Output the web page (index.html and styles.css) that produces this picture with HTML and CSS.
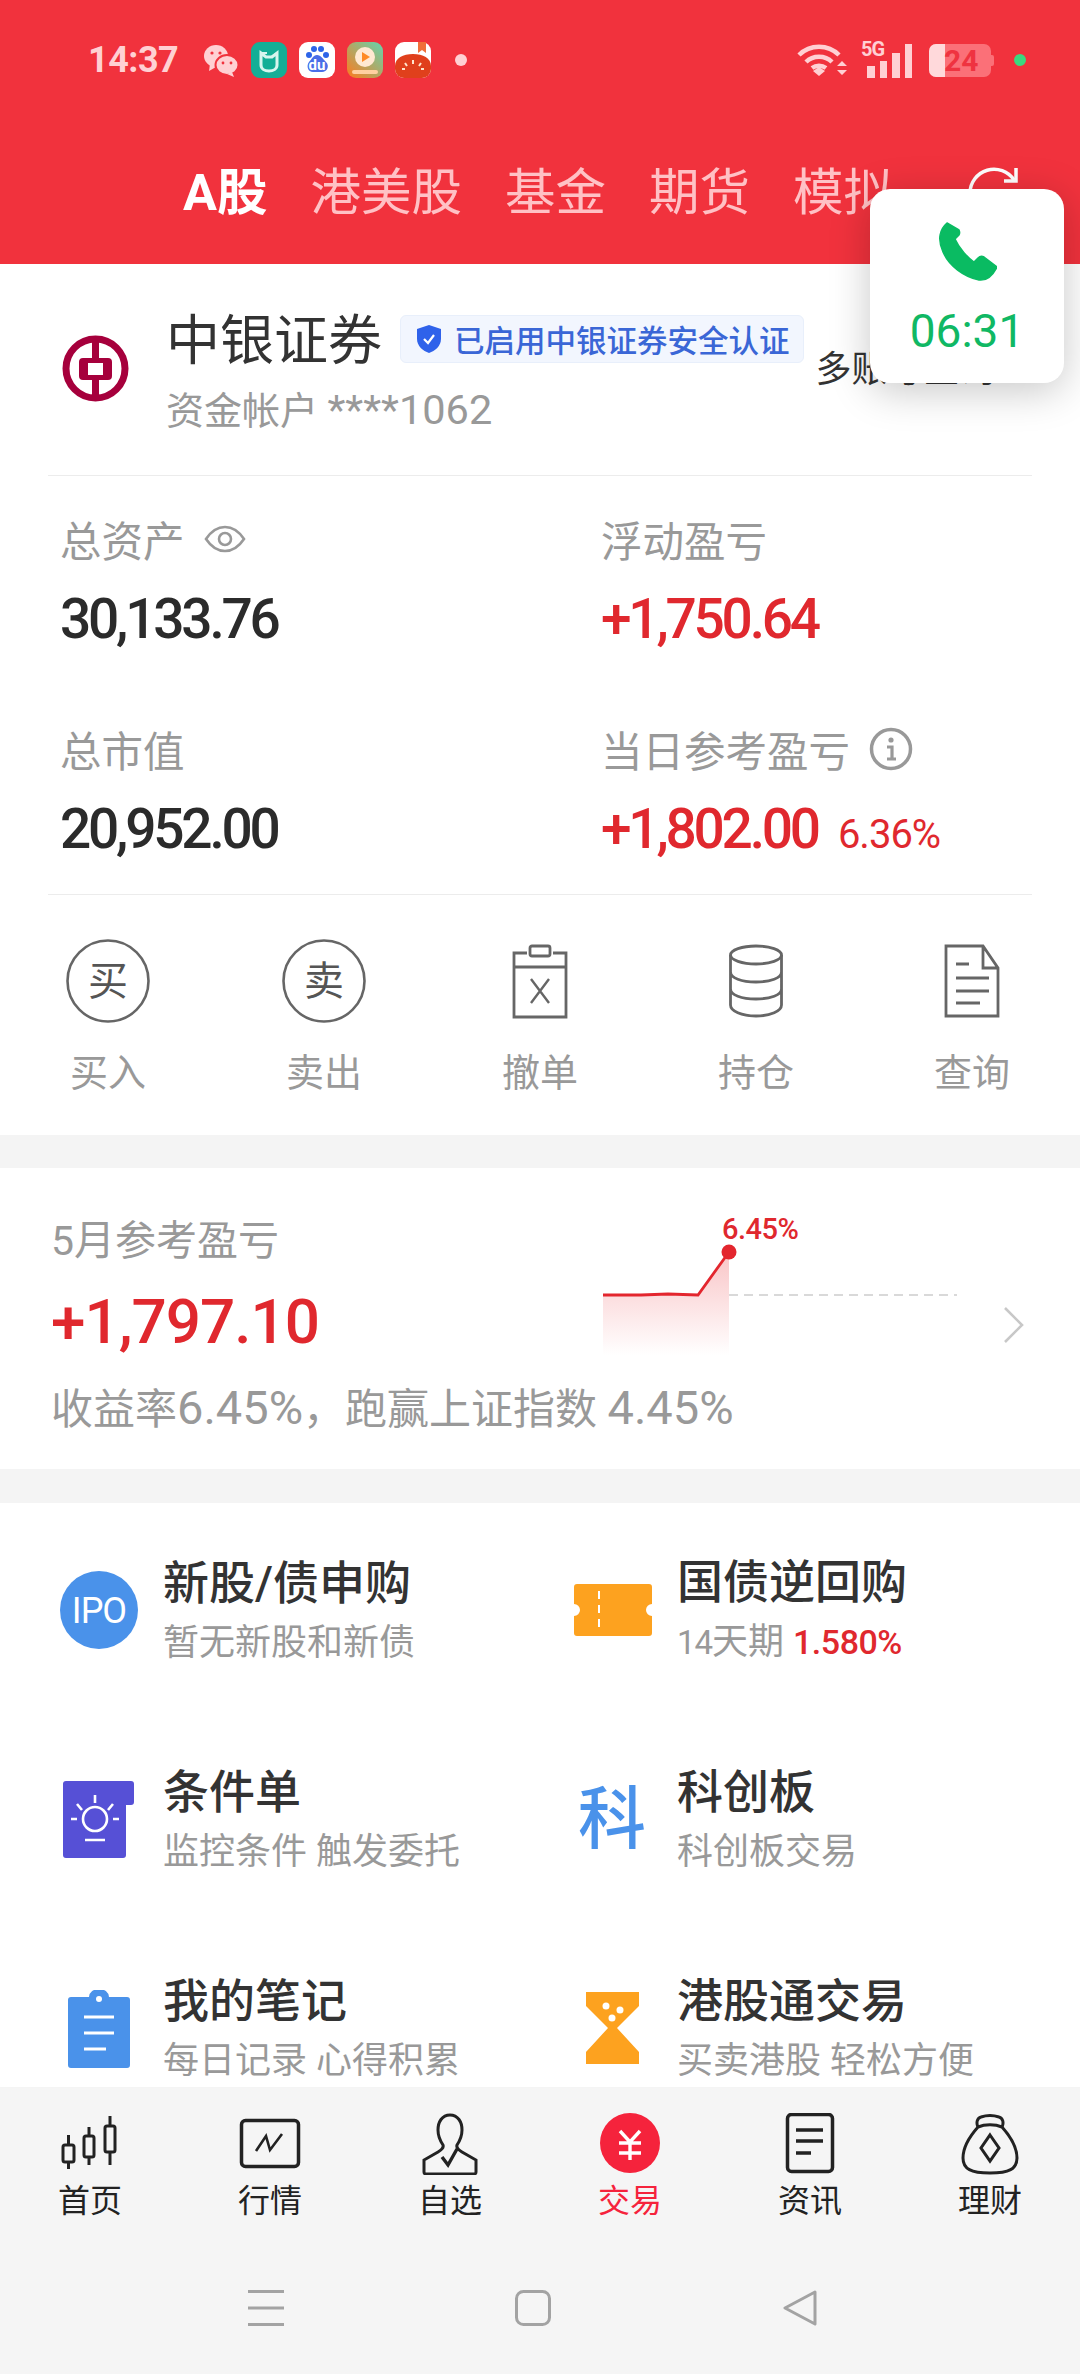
FILE: index.html
```html
<!DOCTYPE html>
<html lang="zh">
  <head>
    <title>交易</title>
    <meta charset="utf-8" />
    <link rel="stylesheet" href="styles.css">
  </head>
  <body>
    <div class="page">
      <div class="header">
        <div class="status-bar">
          <span class="status-time">14:37</span>
          <div class="status-apps">
            <svg width="36" height="36" viewBox="0 0 36 36">
              <ellipse cx="13" cy="14" rx="12" ry="11" fill="#ffd0d3" />
              <path d="M7 22l-1 7 7-4z" fill="#ffd0d3" />
              <ellipse cx="24" cy="23" rx="11.5" ry="10" fill="#ffd0d3" stroke="#f1323d" stroke-width="2" />
              <path d="M29 30l2 5-7-3z" fill="#ffd0d3" />
              <circle cx="9" cy="11" r="1.6" fill="#f1323d" />
              <circle cx="17" cy="11" r="1.6" fill="#f1323d" />
              <circle cx="20" cy="21" r="1.4" fill="#f1323d" />
              <circle cx="28" cy="21" r="1.4" fill="#f1323d" />
            </svg>
            <svg width="36" height="36" viewBox="0 0 36 36">
              <rect width="36" height="36" rx="9" fill="#14ae96" />
              <path d="M10 11l5 4h6l5-4v12c0 4-4 6-8 6s-8-2-8-6z" fill="none" stroke="#d8f5ee" stroke-width="3" />
              <path d="M10 11h6M20 15l6-4" stroke="#d8f5ee" stroke-width="2" />
            </svg>
            <svg width="36" height="36" viewBox="0 0 36 36">
              <rect width="36" height="36" rx="9" fill="#fff" />
              <circle cx="10" cy="13" r="3" fill="#2d64e8" />
              <circle cx="15" cy="7" r="3" fill="#2d64e8" />
              <circle cx="22" cy="7" r="3" fill="#2d64e8" />
              <circle cx="27" cy="13" r="3" fill="#2d64e8" />
              <path d="M18 13c-4 0-5 4-8 7-3 4-1 10 4 10h9c5 0 8-6 4-10-3-3-5-7-9-7z" fill="#4a6de8" />
              <text x="18" y="28" class="app-du">du</text>
            </svg>
            <svg width="36" height="36" viewBox="0 0 36 36">
              <defs>
                <linearGradient id="videoBg" x1="0" y1="1" x2="1" y2="0">
                  <stop offset="0" stop-color="#ff7a1c" />
                  <stop offset="1" stop-color="#62d6b0" />
                </linearGradient>
              </defs>
              <rect width="36" height="36" rx="9" fill="url(#videoBg)" />
              <circle cx="18" cy="15" r="10" fill="#ffe9d2" />
              <path d="M15 10l8 5-8 5z" fill="#ff8a25" />
              <rect x="5" y="28" width="26" height="4" rx="2" fill="#ffd0a0" />
            </svg>
            <svg width="36" height="36" viewBox="0 0 36 36">
              <rect width="36" height="36" rx="9" fill="#fff" />
              <path d="M23 0h8v11l-4-3-4 3z" fill="#f0703a" />
              <path d="M0 24c0-8 8-12 18-12s18 4 18 12v3a9 9 0 0 1-9 9H9a9 9 0 0 1-9-9z" fill="#e0401c" />
              <path d="M18 18v4M10 21l2 3M26 21l-2 3M7 27h3M26 27h3" stroke="#ffe5cc" stroke-width="2" />
            </svg>
            <span class="status-dot"></span>
          </div>
          <div class="status-right">
            <svg width="50" height="36" viewBox="0 0 50 36">
              <path d="M2 13c11-11 29-11 40 0M9 20c7-7 19-7 26 0M15 26c4-3 10-3 14 0" fill="none" stroke="#ffd0d3" stroke-width="4.5" />
              <path d="M16 29l6-4 6 4-6 5z" fill="#ffd0d3" />
              <path d="M40 24l5-5 5 5zM40 28l5 5 5-5z" fill="#ffd0d3" />
            </svg>
            <div class="signal">
              <span class="signal-5g">5G</span>
              <i class="bar bar-1"></i><i class="bar bar-2"></i><i class="bar bar-3"></i><i class="bar bar-4"></i>
            </div>
            <div class="battery">
              <span class="battery-fill"></span>
              <span class="battery-num">24</span>
            </div>
            <span class="status-online"></span>
          </div>
        </div>
        <div class="tabs">
          <span class="tab tab-active">A股</span>
          <span class="tab">港美股</span>
          <span class="tab">基金</span>
          <span class="tab">期货</span>
          <span class="tab">模拟</span>
          <svg class="refresh" width="60" height="60" viewBox="0 0 60 60">
            <path d="M4 30a24 24 0 0 1 44-13" fill="none" stroke="#fff" stroke-width="3.5" />
            <path d="M38 18h12V5" fill="none" stroke="#fff" stroke-width="3.5" />
          </svg>
        </div>
      </div>

      <div class="content">
        <div class="panel account">
          <div class="account-row">
            <svg class="bank-logo" width="67" height="67" viewBox="0 0 67 67">
              <circle cx="33.500" cy="33.500" r="29.500" fill="none" stroke="#a6003c" stroke-width="7" />
              <path d="M21 23h25a4 4 0 0 1 4 4v14a4 4 0 0 1-4 4H21a4 4 0 0 1-4-4V27a4 4 0 0 1 4-4zM26 28v12h15V28z" fill="#a6003c" fill-rule="evenodd" />
              <path d="M33.500 4v20M33.500 44v20" stroke="#a6003c" stroke-width="7" />
            </svg>
            <div class="account-info">
              <div class="account-title">
                <span class="account-name">中银证券</span>
                <span class="badge">
                  <svg width="26" height="28" viewBox="0 0 26 28">
                    <path d="M13 0l12 4v10c0 7-6 12-12 14C7 26 1 21 1 14V4z" fill="#2f62ea" />
                    <path d="M8 14l4 4 6-8" fill="none" stroke="#fff" stroke-width="2.2" />
                  </svg>
                  已启用中银证券安全认证
                </span>
              </div>
              <div class="account-sub">资金帐户 <span class="account-no">****1062</span></div>
            </div>
            <span class="account-more">多账号查询</span>
          </div>
        </div>

        <div class="panel">
          <div class="metrics">
            <div class="metric">
              <div class="metric-label">
                总资产
                <svg width="42" height="30" viewBox="0 0 42 30">
                  <path d="M2 15C8 6 14 3 21 3s13 3 19 12c-6 9-12 12-19 12S8 24 2 15z" fill="none" stroke="#999" stroke-width="2.6" />
                  <circle cx="21" cy="15" r="6" fill="none" stroke="#999" stroke-width="2.6" />
                </svg>
              </div>
              <div class="metric-value">30,133.76</div>
            </div>
            <div class="metric">
              <div class="metric-label">浮动盈亏</div>
              <div class="metric-value up">+1,750.64</div>
            </div>
            <div class="metric">
              <div class="metric-label">总市值</div>
              <div class="metric-value">20,952.00</div>
            </div>
            <div class="metric">
              <div class="metric-label">
                当日参考盈亏
                <svg width="44" height="44" viewBox="0 0 44 44">
                  <circle cx="22" cy="22" r="19.500" fill="none" stroke="#999" stroke-width="3.5" />
                  <circle cx="22" cy="13" r="2.600" fill="#999" />
                  <path d="M18 20h5v12M18 32h9" fill="none" stroke="#999" stroke-width="3.2" />
                </svg>
              </div>
              <div class="metric-value up">+1,802.00<span class="metric-pct">6.36%</span></div>
            </div>
          </div>
        </div>

        <div class="actions">
          <div class="action">
            <svg width="84" height="84" viewBox="0 0 84 84">
              <circle cx="42" cy="42" r="40.500" fill="none" stroke="#666" stroke-width="2.600" />
              <text x="42" y="56" class="action-char">买</text>
            </svg>
            <span>买入</span>
          </div>
          <div class="action">
            <svg width="84" height="84" viewBox="0 0 84 84">
              <circle cx="42" cy="42" r="40.500" fill="none" stroke="#666" stroke-width="2.600" />
              <text x="42" y="56" class="action-char">卖</text>
            </svg>
            <span>卖出</span>
          </div>
          <div class="action">
            <svg width="84" height="84" viewBox="0 0 84 84" fill="none" stroke="#666" stroke-width="2.800">
              <path d="M29 14h-13v64h52V14H55M16 28h52" />
              <rect x="32" y="7" width="20" height="10" rx="2" />
              <path d="M33 40l18 24M51 40L33 64" stroke-width="2.400" />
            </svg>
            <span>撤单</span>
          </div>
          <div class="action">
            <svg width="84" height="84" viewBox="0 0 84 84" fill="none" stroke="#666" stroke-width="2.800">
              <ellipse cx="42" cy="16" rx="25.500" ry="9" />
              <path d="M16.500 16v50c0 6 11 11 25.500 11s25.500-5 25.500-11V16M16.500 33c0 6 11 10 25.500 10s25.500-4 25.500-10M16.500 50c0 6 11 10 25.500 10s25.500-4 25.500-10" />
            </svg>
            <span>持仓</span>
          </div>
          <div class="action">
            <svg width="84" height="84" viewBox="0 0 84 84" fill="none" stroke="#666" stroke-width="2.800">
              <path d="M16 7h37l15 22v48H16zM53 7v22h15" />
              <path d="M26 25h13M26 39h33M26 52h33M26 64h24" />
            </svg>
            <span>查询</span>
          </div>
        </div>

        <div class="panel profit">
          <div class="profit-text">
            <div class="profit-label">5月参考盈亏</div>
            <div class="profit-value">+1,797.10</div>
            <div class="profit-note">收益率<span class="note-num">6.45%</span>，跑赢上证指数 <span class="note-num">4.45%</span></div>
          </div>
          <svg class="profit-chart" width="354" height="150" viewBox="0 0 354 150">
            <defs>
              <linearGradient id="chartFill" x1="0" y1="0" x2="0" y2="1">
                <stop offset="0" stop-color="#f6a5a8" stop-opacity="0.65" />
                <stop offset="1" stop-color="#f6a5a8" stop-opacity="0" />
              </linearGradient>
            </defs>
            <path d="M0 86L38 86 65 85 95 86 126 43V146H0z" fill="url(#chartFill)" />
            <path d="M126 86H354" stroke="#d9d9d9" stroke-width="2" stroke-dasharray="9 6" />
            <path d="M0 86L38 86 65 85 95 86 126 43" fill="none" stroke="#e3262e" stroke-width="2.800" />
            <circle cx="126" cy="43" r="7.500" fill="#e3262e" />
            <text x="119" y="30" class="chart-label">6.45%</text>
          </svg>
          <svg class="profit-arrow" width="20" height="36" viewBox="0 0 20 36">
            <path d="M1 1l17 17L1 35" fill="none" stroke="#c8c8c8" stroke-width="2.600" />
          </svg>
        </div>

        <div class="panel services">
          <div class="service">
            <div class="service-icon">
              <svg width="78" height="78" viewBox="0 0 78 78">
                <circle cx="39" cy="39" r="39" fill="#4a92ea" />
                <text x="39" y="52" class="ipo-text">IPO</text>
              </svg>
            </div>
            <div>
              <div class="service-title">新股/债申购</div>
              <div class="service-sub">暂无新股和新债</div>
            </div>
          </div>
          <div class="service">
            <div class="service-icon">
              <svg width="78" height="78" viewBox="0 0 78 78">
                <path d="M3 13h72a3 3 0 0 1 3 3v17a6 6 0 0 0 0 12v17a3 3 0 0 1-3 3H3a3 3 0 0 1-3-3V45a6 6 0 0 0 0-12V16a3 3 0 0 1 3-3z" fill="#fda21f" />
                <path d="M25 20v38" stroke="#fff" stroke-width="2" stroke-dasharray="8 6" />
              </svg>
            </div>
            <div>
              <div class="service-title">国债逆回购</div>
              <div class="service-sub"><span class="sub-num">14</span>天期 <span class="service-rate">1.580%</span></div>
            </div>
          </div>
          <div class="service">
            <div class="service-icon">
              <svg width="78" height="78" viewBox="0 0 78 78">
                <path d="M6 0h65a3 3 0 0 1 3 3v18a3 3 0 0 1-3 3h-5v50a3 3 0 0 1-3 3H6a3 3 0 0 1-3-3V3a3 3 0 0 1 3-3z" fill="#5650d6" />
                <circle cx="35" cy="38" r="12" fill="none" stroke="#fff" stroke-width="2.600" />
                <path d="M35 14v8M17 23l5 6M53 23l-5 6M11 38h6M53 38h6M25 59h20" stroke="#fff" stroke-width="2.600" />
              </svg>
            </div>
            <div>
              <div class="service-title">条件单</div>
              <div class="service-sub">监控条件 触发委托</div>
            </div>
          </div>
          <div class="service">
            <div class="service-icon">
              <span class="service-glyph">科</span>
            </div>
            <div>
              <div class="service-title">科创板</div>
              <div class="service-sub">科创板交易</div>
            </div>
          </div>
          <div class="service">
            <div class="service-icon">
              <svg width="78" height="78" viewBox="0 0 78 78">
                <path d="M11 7h18a10 8 0 0 1 20 0h18a3 3 0 0 1 3 3v65a3 3 0 0 1-3 3H11a3 3 0 0 1-3-3V10a3 3 0 0 1 3-3z" fill="#4a92ea" />
                <circle cx="39" cy="9" r="3" fill="#fff" />
                <path d="M24 27h30M24 43h30M24 59h22" stroke="#fff" stroke-width="3" />
              </svg>
            </div>
            <div>
              <div class="service-title">我的笔记</div>
              <div class="service-sub">每日记录 心得积累</div>
            </div>
          </div>
          <div class="service">
            <div class="service-icon">
              <svg width="78" height="78" viewBox="0 0 78 78">
                <path d="M12 2h53v14L43 38l22 24v12H12V62l22-24L12 16z" fill="#fda21f" />
                <circle cx="32" cy="16" r="3.500" fill="#fff" />
                <circle cx="46" cy="20" r="3.500" fill="#fff" />
                <circle cx="38" cy="28" r="3.500" fill="#fff" />
              </svg>
            </div>
            <div>
              <div class="service-title">港股通交易</div>
              <div class="service-sub">买卖港股 轻松方便</div>
            </div>
          </div>
        </div>
      </div>

      <div class="bottom">
        <div class="tabbar">
          <div class="tabbar-item">
            <svg width="80" height="62" viewBox="0 0 80 62" fill="none" stroke="#222" stroke-width="3">
              <rect x="13" y="32" width="11" height="17" rx="2" />
              <rect x="34" y="23" width="10" height="21" rx="2" />
              <rect x="55" y="13" width="10" height="26" rx="2" />
              <path d="M18.500 22v10M18.500 49v7M39 14v9M39 44v8M60 3v10M60 39v13" />
            </svg>
            <span>首页</span>
          </div>
          <div class="tabbar-item">
            <svg width="80" height="62" viewBox="0 0 80 62" fill="none" stroke="#222">
              <rect x="11.500" y="7.500" width="57" height="46" rx="4" stroke-width="3.500" />
              <path d="M26 38l10-15 4 14 12-16" stroke-width="2.600" />
            </svg>
            <span>行情</span>
          </div>
          <div class="tabbar-item">
            <svg width="80" height="62" viewBox="0 0 80 62" fill="none" stroke="#222" stroke-width="3">
              <path d="M40 2c-8 0-12 7-12 15 0 7 3 12 5 15 1 3-2 5-5 7l-14 8v12a2 2 0 0 0 2 2h48a2 2 0 0 0 2-2V47l-14-8c-3-2-6-4-5-7 2-3 5-8 5-15 0-8-4-15-12-15z" />
              <path d="M32 44l6 8 9-16" stroke-width="3.400" />
            </svg>
            <span>自选</span>
          </div>
          <div class="tabbar-item tabbar-active">
            <svg width="80" height="62" viewBox="0 0 80 62">
              <circle cx="40" cy="30" r="30" fill="#f5233c" />
              <path d="M30 18l10 11 10-11M29 30h22M29 40h22M40 29v18" fill="none" stroke="#fff" stroke-width="3.400" />
            </svg>
            <span>交易</span>
          </div>
          <div class="tabbar-item">
            <svg width="80" height="62" viewBox="0 0 80 62" fill="none" stroke="#222">
              <rect x="17.500" y="1.500" width="45" height="57" rx="4" stroke-width="3.500" />
              <path d="M26 17h27M26 28h27M26 40h15" stroke-width="3.500" />
            </svg>
            <span>资讯</span>
          </div>
          <div class="tabbar-item">
            <svg width="80" height="62" viewBox="0 0 80 62" fill="none" stroke="#222" stroke-width="3">
              <path d="M28 14c-2-4-1-9 3-10 6-2 12-2 18 0 4 1 5 6 3 10" />
              <path d="M28 14c7-3 17-3 24 0 8 9 15 21 15 31 0 11-8 15-27 15s-27-4-27-15c0-10 7-22 15-31z" />
              <path d="M40 22l9 13-9 13-9-13z" />
            </svg>
            <span>理财</span>
          </div>
        </div>
        <div class="sysnav">
          <svg width="36" height="36" viewBox="0 0 36 36">
            <path d="M0 1.500h36M0 18h36M0 34.500h36" stroke="#a3a3a3" stroke-width="3" />
          </svg>
          <svg width="36" height="36" viewBox="0 0 36 36">
            <rect x="1.500" y="1.500" width="33" height="33" rx="7" fill="none" stroke="#a3a3a3" stroke-width="3" />
          </svg>
          <svg width="36" height="36" viewBox="0 0 36 36">
            <path d="M33 2L3 18l30 16z" fill="none" stroke="#a3a3a3" stroke-width="3" stroke-linejoin="round" />
          </svg>
        </div>
      </div>

      <div class="call-card">
        <svg width="60" height="60" viewBox="0 0 60 60">
          <path d="M10 2C3 8 0 18 6 31c6 14 21 25 36 28 8 1 14-5 18-13L47 36c-2-1-4-1-6 1l-4 4c-6-4-15-14-19-23l4-4c1-2 1-3 0-5z" fill="#0abb62" stroke="#0abb62" stroke-width="1.500" stroke-linejoin="round" />
        </svg>
        <span class="call-time">06:31</span>
      </div>
    </div>
  </body>
</html>
```
FILE: styles.css
```css
* {
  box-sizing: border-box;
}

body {
  margin: 0;
  font-family: Roboto, "Noto Sans CJK SC", sans-serif;
  color: #2b2b2b;
  background-color: #f4f4f4;
}

svg {
  display: block;
}

.page {
  position: relative;
  display: flex;
  flex-direction: column;
  width: 1080px;
  height: 2374px;
  overflow: hidden;
}

/* header */

.header {
  height: 264px;
  background-color: #f1323d;
  overflow: hidden;
}

.status-bar {
  display: flex;
  align-items: center;
  height: 120px;
  padding: 0 54px 0 88px;
  color: #ffd0d3;
}

.status-time {
  width: 90px;
  font-size: 36px;
  font-weight: 700;
  letter-spacing: -0.5px;
}

.status-apps {
  display: flex;
  align-items: center;
  gap: 12px;
  margin-left: 25px;
}

.app-du {
  font-size: 15px;
  font-weight: 700;
  fill: #fff;
  text-anchor: middle;
}

.status-dot {
  width: 12px;
  height: 12px;
  margin-left: 12px;
  border-radius: 50%;
  background-color: #ffd0d3;
}

.status-right {
  display: flex;
  align-items: center;
  margin-left: auto;
}

.signal {
  position: relative;
  display: flex;
  align-items: flex-end;
  gap: 5px;
  width: 45px;
  height: 36px;
  margin-left: 20px;
}

.signal-5g {
  position: absolute;
  left: -6px;
  top: -3px;
  font-size: 20px;
  font-weight: 700;
  line-height: 20px;
  letter-spacing: -1px;
}

.bar {
  width: 7.5px;
  background-color: #ffd0d3;
}

.bar-1 {
  height: 12px;
}

.bar-2 {
  height: 17px;
}

.bar-3 {
  height: 25px;
}

.bar-4 {
  height: 34px;
}

.battery {
  position: relative;
  width: 62px;
  height: 33px;
  margin-left: 17px;
  margin-right: 2px;
  border-radius: 7px;
  background-color: #fb7078;
}

.battery::after {
  content: "";
  position: absolute;
  right: -3px;
  top: 11px;
  width: 3px;
  height: 11px;
  border-radius: 0 2px 2px 0;
  background-color: #fb7078;
}

.battery-fill {
  display: block;
  width: 16px;
  height: 100%;
  border-radius: 7px 0 0 7px;
  background-color: #ffd9db;
}

.battery-num {
  position: absolute;
  left: 15px;
  top: 0;
  font-size: 30px;
  font-weight: 700;
  line-height: 33px;
  color: #ef3340;
}

.status-online {
  width: 12px;
  height: 12px;
  margin-left: 21px;
  border-radius: 50%;
  background-color: #3bd97f;
}

.tabs {
  display: flex;
  align-items: center;
  gap: 43px;
  height: 146px;
  padding-left: 183px;
}

.tab {
  font-size: 50.500px;
  line-height: 70px;
  color: #ffc1c5;
}

.tab-active {
  font-weight: 700;
  color: #fff;
}

.refresh {
  margin-left: 29px;
}

/* content */

.content {
  flex: 1;
  min-height: 0;
  overflow: hidden;
}

.panel {
  background-color: #fff;
}

.account {
  padding: 43px 48px 39px;
}

.account-row {
  display: flex;
  padding-left: 14px;
}

.bank-logo {
  flex: none;
  margin: 28px 37px 0 0;
}

.account-title {
  display: flex;
  align-items: center;
  gap: 18px;
  height: 70px;
}

.account-name {
  font-size: 54px;
  line-height: 70px;
  white-space: nowrap;
  color: #333;
}

.badge {
  display: flex;
  align-items: center;
  gap: 12px;
  height: 48px;
  margin-top: -6px;
  padding: 0 13px 0 15px;
  border: 1px solid #e8effb;
  border-radius: 6px;
  font-size: 30.500px;
  font-weight: 500;
  white-space: nowrap;
  color: #3a66d6;
  background-color: #f2f6fe;
}

.account-sub {
  margin-top: 8px;
  font-size: 38px;
  line-height: 50px;
  white-space: nowrap;
  color: #999;
}

.account-no {
  font-size: 41.500px;
}

.account-more {
  flex: none;
  margin: 38px 0 0 12px;
  font-size: 36px;
  line-height: 50px;
  color: #333;
}

.metrics {
  display: grid;
  grid-template-columns: 541px 1fr;
  row-gap: 72px;
  margin: 0 48px;
  padding: 35px 0 29px 12px;
  border-top: 1px solid #ececec;
  border-bottom: 1px solid #ececec;
}

.metric-label {
  display: flex;
  align-items: center;
  gap: 19px;
  height: 56px;
  font-size: 41.500px;
  color: #999;
}

.metric-value {
  display: flex;
  align-items: baseline;
  margin-top: 22px;
  font-size: 55px;
  font-weight: 500;
  line-height: 60px;
  letter-spacing: -3.200px;
}

.up {
  color: #e0282e;
}

.metric-pct {
  margin-left: 20px;
  font-size: 40px;
  font-weight: 400;
  letter-spacing: -1px;
}

.actions {
  display: grid;
  grid-template-columns: repeat(5, 216px);
  padding: 44px 0 37px;
  background-color: #fff;
}

.action {
  display: flex;
  flex-direction: column;
  align-items: center;
  gap: 25px;
  font-size: 38px;
  line-height: 50px;
  color: #999;
}

.action-char {
  font-size: 40px;
  fill: #555;
  text-anchor: middle;
}

.profit {
  display: flex;
  margin-top: 33px;
  padding: 48px 0 34px 51px;
}

.profit-text {
  flex: none;
  width: 552px;
  white-space: nowrap;
}

.profit-label {
  font-size: 41px;
  line-height: 50px;
  color: #999;
}

.profit-value {
  margin-top: 21px;
  font-size: 62px;
  font-weight: 500;
  line-height: 70px;
  letter-spacing: -1px;
  color: #e0282e;
}

.profit-note {
  margin-top: 26px;
  font-size: 42px;
  line-height: 50px;
  color: #999;
}

.note-num {
  font-size: 47px;
}

.profit-chart {
  flex: none;
  margin-top: -7px;
}

.chart-label {
  font-size: 29px;
  font-weight: 500;
  letter-spacing: -0.5px;
  fill: #e0282e;
}

.profit-arrow {
  flex: none;
  margin: 91px 0 0 47px;
}

.services {
  display: grid;
  grid-template-columns: 514px 1fr;
  row-gap: 94px;
  margin-top: 34px;
  padding: 49px 0 1px 60px;
}

.service {
  display: flex;
  align-items: center;
}

.service-icon {
  flex: none;
  width: 103px;
}

.service-glyph {
  display: block;
  width: 78px;
  padding-left: 4px;
  font-size: 68px;
  font-weight: 500;
  line-height: 78px;
  color: #4a92ea;
}

.service-title {
  font-size: 46px;
  font-weight: 500;
  line-height: 60px;
  color: #333;
}

.service-sub {
  margin-top: 5px;
  font-size: 36px;
  line-height: 50px;
  color: #999;
}

.sub-num {
  font-size: 33px;
  letter-spacing: -1px;
}

.service-rate {
  font-size: 34px;
  font-weight: 500;
  letter-spacing: -0.5px;
  color: #e0282e;
}

.ipo-text {
  font-size: 36px;
  font-weight: 400;
  letter-spacing: -1px;
  fill: #fff;
  text-anchor: middle;
}

/* bottom bar */

.bottom {
  flex: none;
  height: 286px;
  background-color: #f5f5f5;
}

.tabbar {
  display: grid;
  grid-template-columns: repeat(6, 180px);
  padding-top: 25px;
}

.tabbar-item {
  display: flex;
  flex-direction: column;
  align-items: center;
  gap: 6px;
  font-size: 32px;
  line-height: 40px;
  color: #222;
}

.tabbar-active {
  color: #f5233c;
}

.sysnav {
  display: flex;
  gap: 231px;
  margin-top: 69px;
  padding-left: 248px;
}

/* floating call window */

.call-card {
  position: absolute;
  left: 870px;
  top: 189px;
  display: flex;
  flex-direction: column;
  align-items: center;
  width: 194px;
  height: 194px;
  padding-top: 32px;
  border-radius: 20px;
  background-color: #fff;
  box-shadow: 0 8px 40px rgba(0, 0, 0, 0.22);
}

.call-time {
  margin-top: 20px;
  font-size: 46px;
  line-height: 60px;
  color: #10b864;
}
```
